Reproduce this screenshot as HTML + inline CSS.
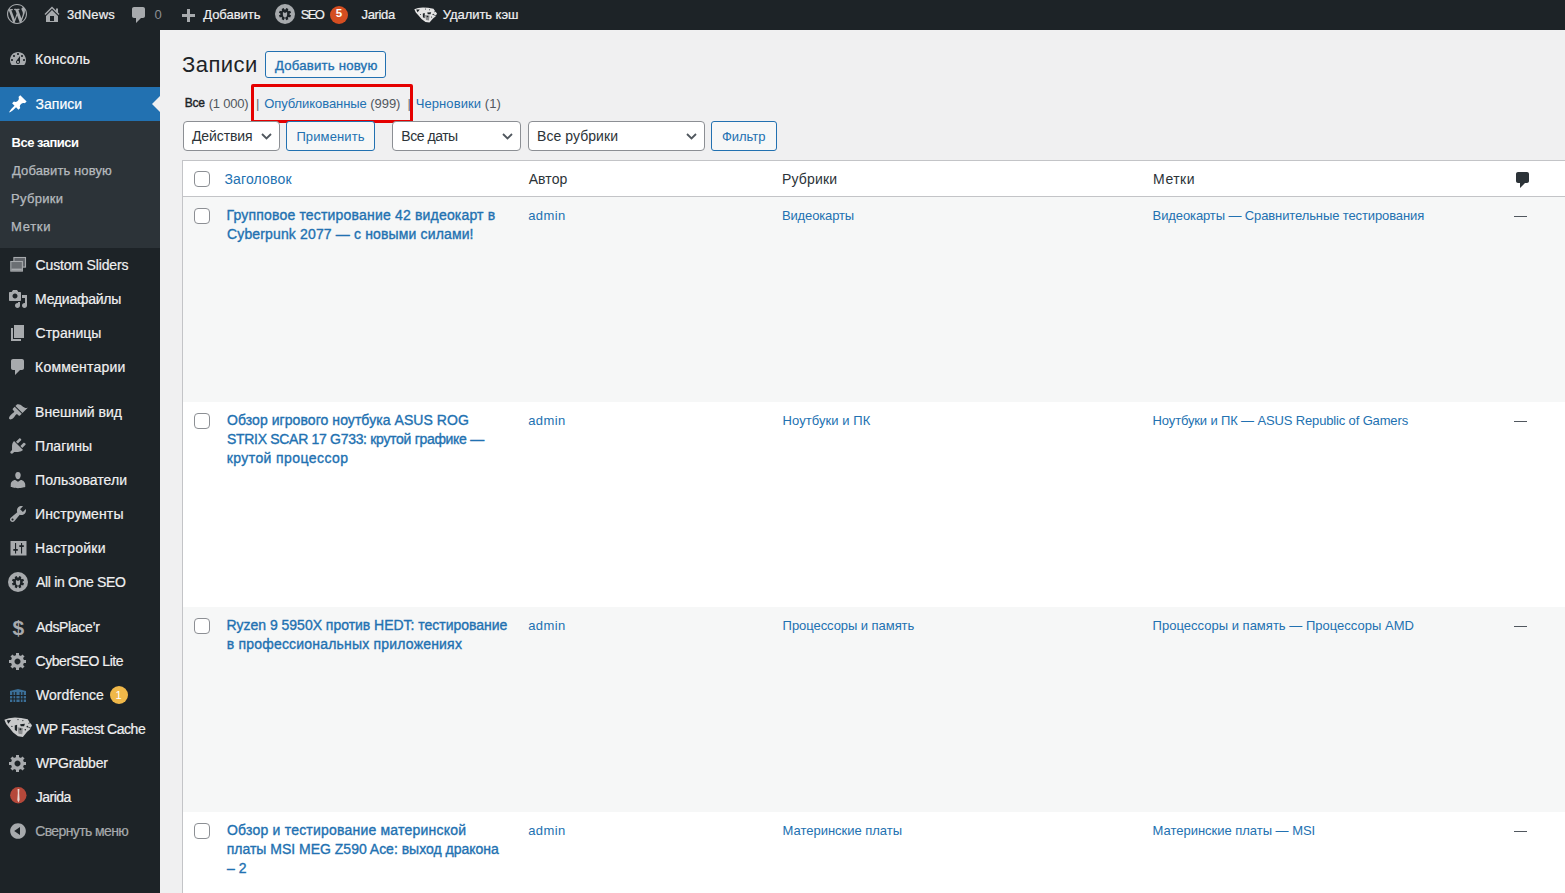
<!DOCTYPE html>
<html><head><meta charset="utf-8">
<style>
*{margin:0;padding:0;box-sizing:border-box}
html,body{width:1565px;height:893px;overflow:hidden;background:#f0f0f1;font-family:"Liberation Sans",sans-serif;font-size:13px;color:#3c434a}
.abs{position:absolute;white-space:nowrap}
.box{position:absolute}
svg{position:absolute;overflow:visible}
</style></head><body>
<div class="box" style="left:0;top:0;width:1565px;height:30px;background:#1d2327"></div>
<div class="abs" style="left:66.95px;top:8.00px;font-size:13px;line-height:13px;color:#f0f0f1;-webkit-text-stroke:0.2px #f0f0f1;letter-spacing:0.180px;">3dNews</div>
<div class="abs" style="left:154.50px;top:8.00px;font-size:13px;line-height:13px;color:#8c8f94;letter-spacing:0.750px;">0</div>
<div class="abs" style="left:203.25px;top:8.00px;font-size:13px;line-height:13px;color:#f0f0f1;-webkit-text-stroke:0.2px #f0f0f1;letter-spacing:-0.043px;">Добавить</div>
<div class="abs" style="left:300.65px;top:8.00px;font-size:13px;line-height:13px;color:#f0f0f1;-webkit-text-stroke:0.2px #f0f0f1;letter-spacing:-1.650px;">SEO</div>
<div class="abs" style="left:361.50px;top:8.00px;font-size:13px;line-height:13px;color:#f0f0f1;-webkit-text-stroke:0.2px #f0f0f1;letter-spacing:-0.350px;">Jarida</div>
<div class="abs" style="left:442.85px;top:8.00px;font-size:13px;line-height:13px;color:#f0f0f1;-webkit-text-stroke:0.2px #f0f0f1;letter-spacing:-0.060px;">Удалить кэш</div>
<svg style="left:7px;top:4px" width="20" height="20" viewBox="0 0 20 20"><path d="M20 10c0-5.51-4.49-10-10-10C4.48 0 0 4.49 0 10c0 5.52 4.48 10 10 10 5.51 0 10-4.48 10-10zM7.78 15.37L4.37 6.22c.55-.02 1.17-.08 1.17-.08.5-.06.44-1.13-.06-1.11 0 0-1.45.11-2.37.11-.18 0-.37 0-.58-.01C4.12 2.69 6.87 1.11 10 1.11c2.33 0 4.45.87 6.05 2.34-.68-.11-1.65.39-1.65 1.58 0 .74.45 1.36.9 2.1.35.61.55 1.36.55 2.46 0 1.49-1.4 5-1.4 5l-3.03-8.37c.54-.02.82-.17.82-.17.5-.05.44-1.25-.06-1.22 0 0-1.44.12-2.38.12-.87 0-2.33-.12-2.33-.12-.5-.03-.56 1.2-.06 1.22l.92.08 1.26 3.41zM17.41 10c.24-.64.74-1.87.43-4.25.7 1.290 1.05 2.71 1.05 4.25 0 3.29-1.73 6.24-4.4 7.78.97-2.59 1.94-5.2 2.92-7.78zM6.1 18.09C3.12 16.65 1.11 13.53 1.11 10c0-1.3.23-2.48.72-3.59C3.25 10.3 4.67 14.2 6.1 18.09zm4.03-6.63l2.58 6.98c-.86.29-1.76.45-2.71.45-.79 0-1.57-.11-2.29-.33.81-2.38 1.62-4.74 2.42-7.1z" fill="#a7aaad"/></svg>
<svg style="left:41.5px;top:4px" width="20" height="20" viewBox="0 0 20 20"><path d="M16 8.5l1.53 1.53-1.06 1.06L10 4.62l-6.47 6.47-1.06-1.06L10 2.5l4 4v-2h2v4zm-6-2.46l6 5.99V18H4v-5.97zM12 17v-5H8v5h4z" fill="#a7aaad"/></svg>
<svg style="left:129px;top:5px" width="20" height="20" viewBox="0 0 20 20"><path d="M5 2h9c1.1 0 2 .9 2 2v7c0 1.1-.9 2-2 2h-2l-5 5v-5H5c-1.1 0-2-.9-2-2V4c0-1.1.9-2 2-2z" fill="#a7aaad"/></svg>
<svg style="left:177.5px;top:6.5px" width="20" height="20" viewBox="0 0 20 20"><path d="M17 7v3h-5v5H9v-5H4V7h5V2h3v5h5z" fill="#a7aaad"/></svg>
<svg style="left:275px;top:4px" width="20" height="20" viewBox="0 0 20 20"><circle cx="10" cy="10" r="10" fill="#a7aaad"/><path d="M10.61 5.44 L11.24 4.02 L13.42 4.93 L12.86 6.37 L13.73 7.24 L15.17 6.68 L16.08 8.86 L14.66 9.49 L14.66 10.71 L16.08 11.34 L15.17 13.52 L13.73 12.96 L12.86 13.83 L13.42 15.27 L11.24 16.18 L10.61 14.76 L9.39 14.76 L8.76 16.18 L6.58 15.27 L7.14 13.83 L6.27 12.96 L4.83 13.52 L3.92 11.34 L5.34 10.71 L5.34 9.49 L3.92 8.86 L4.83 6.68 L6.27 7.24 L7.14 6.37 L6.58 4.93 L8.76 4.02 L9.39 5.44 Z" fill="#1d2327"/><path d="M7.9 8.2 L9.2 8.2 L9.5 9 L10.5 9 L10.8 8.2 L12.1 8.2 L12.1 11 Q12.1 13.4 10 13.6 Q7.9 13.4 7.9 11 Z" fill="#a7aaad"/><rect x="9.6" y="13.4" width="0.8" height="1.3" fill="#a7aaad"/></svg>
<div class="box" style="left:330px;top:5.5px;width:18px;height:18px;border-radius:9px;background:#d54e21"></div>
<div class="abs" style="left:335.80px;top:8.47px;font-size:11.5px;line-height:11.5px;color:#fff;font-weight:700;">5</div>
<svg style="left:414px;top:6.5px" width="23" height="16" viewBox="0 0 23 16"><path d="M0.3 2.2 L4 0.9 L9 0.4 L14 0.8 L19.5 1.8 L21 4 L23 6.5 L21.5 9.5 L19 11.5 L15.5 15.6 L11.5 15 L7.5 12 L4.5 8.5 L1.8 5.5 Z" fill="#e4e4e4"/><g fill="#1d2327"><path d="M2.2 2.6 L5.8 2.4 L3.6 5.2 Z"/><path d="M8.8 6.6 L10.8 6 L10.6 11.2 L8.9 10.2 Z"/><path d="M13.2 5.6 L17.2 5.3 L16.5 7.2 L13.8 7.2 Z"/><circle cx="11.5" cy="2" r="0.5"/><circle cx="15.5" cy="2.8" r="0.5"/><circle cx="19.2" cy="7.5" r="0.7"/><circle cx="6.5" cy="7.4" r="0.5"/><circle cx="17.5" cy="10" r="0.6"/><path d="M20 5 L22.5 4 M20 8 L23 9" stroke="#1d2327" stroke-width="0.6"/></g><path d="M11 8 L15.5 8.5 L15 13.5 L12 13 Z" fill="#8a8c8e"/><circle cx="13.5" cy="9.5" r="0.8" fill="#1d2327"/></svg>
<div class="box" style="left:0;top:30px;width:160px;height:863px;background:#1d2327"></div>
<div class="box" style="left:0;top:87px;width:160px;height:34px;background:#2271b1"></div>
<div class="box" style="left:0;top:121px;width:160px;height:127px;background:#2c3338"></div>
<svg style="left:152px;top:96px" width="8" height="16" viewBox="0 0 8 16"><path d="M8 0 L0 8 L8 16 Z" fill="#f0f0f1"/></svg>
<svg style="left:8px;top:49px" width="20" height="20" viewBox="0 0 20 20"><path d="M3.76 16h12.48c1.1-1.37 1.76-3.11 1.76-5 0-4.42-3.58-8-8-8s-8 3.58-8 8c0 1.890.66 3.63 1.76 5zM10 4c.55 0 1 .45 1 1s-.45 1-1 1-1-.45-1-1 .45-1 1-1zM6 6c.55 0 1 .45 1 1s-.45 1-1 1-1-.45-1-1 .45-1 1-1zm8 0c.55 0 1 .45 1 1s-.45 1-1 1-1-.45-1-1 .45-1 1-1zm-5.37 5.55L12 7v6c0 1.1-.9 2-2 2s-2-.9-2-2c0-.57.24-1.08.63-1.45zM4 10c.55 0 1 .45 1 1s-.45 1-1 1-1-.45-1-1 .45-1 1-1zm12 0c.55 0 1 .45 1 1s-.45 1-1 1-1-.45-1-1 .45-1 1-1zm-5 3c0-.55-.45-1-1-1s-1 .45-1 1 .45 1 1 1 1-.45 1-1z" fill="#a7aaad" fill-rule="evenodd" /></svg>
<div class="abs" style="left:35.05px;top:52.15px;font-size:14px;line-height:14px;color:#f0f0f1;-webkit-text-stroke:0.2px #f0f0f1;letter-spacing:0.225px;">Консоль</div>
<svg style="left:8px;top:94px" width="20" height="20" viewBox="0 0 20 20"><path d="M10.44 3.02l1.82-1.82 6.360 6.35-1.83 1.82c-1.05-.68-2.48-.57-3.410.36l-.75.75c-.92.93-1.04 2.35-.35 3.410l-1.83 1.82-2.41-2.41-2.8 2.79c-.42.42-3.38 2.71-3.8 2.29s1.86-3.39 2.28-3.81l2.79-2.79L4.1 9.36l1.830-1.82c1.05.69 2.48.57 3.4-.36l.75-.75c.93-.92 1.05-2.35.36-3.41z" fill="#fff" fill-rule="evenodd" /></svg>
<div class="abs" style="left:35.55px;top:97.15px;font-size:14px;line-height:14px;color:#fff;-webkit-text-stroke:0.2px #fff;letter-spacing:0.010px;">Записи</div>
<svg style="left:8px;top:255px" width="20" height="20" viewBox="0 0 20 20"><rect x="5.9" y="2.5" width="11.6" height="9.6" fill="#5f6368" stroke="#a7aaad" stroke-width="1.1"/><rect x="2.8" y="6.5" width="11.6" height="9.6" fill="#1d2327" /><rect x="2.8" y="6.5" width="11.6" height="9.6" fill="#6b6f73" stroke="#a7aaad" stroke-width="1.1"/><rect x="3.4" y="13.6" width="10.4" height="1.9" fill="#a7aaad"/></svg>
<div class="abs" style="left:35.55px;top:258.15px;font-size:14px;line-height:14px;color:#f0f0f1;-webkit-text-stroke:0.2px #f0f0f1;letter-spacing:-0.154px;">Custom Sliders</div>
<svg style="left:8px;top:289px" width="20" height="20" viewBox="0 0 20 20"><path d="M13 11V4c0-.55-.45-1-1-1h-1.67L9 1H5L3.67 3H2c-.55 0-1 .45-1 1v7c0 .55.45 1 1 1h10c.55 0 1-.45 1-1zM7 4.5c1.38 0 2.5 1.12 2.5 2.5S8.38 9.5 7 9.5 4.5 8.38 4.5 7 5.62 4.5 7 4.5zM14 6h5v10.5c0 1.38-1.12 2.5-2.5 2.5S14 17.88 14 16.5s1.12-2.5 2.5-2.5c.17 0 .34.02.5.05V9h-3V6zm-4 8.05V13h2v3.5c0 1.38-1.12 2.5-2.5 2.5S7 17.88 7 16.5 8.12 14 9.5 14c.17 0 .34.02.5.05z" fill="#a7aaad" fill-rule="evenodd" /></svg>
<div class="abs" style="left:35.05px;top:292.15px;font-size:14px;line-height:14px;color:#f0f0f1;-webkit-text-stroke:0.2px #f0f0f1;letter-spacing:-0.239px;">Медиафайлы</div>
<svg style="left:8px;top:323px" width="20" height="20" viewBox="0 0 20 20"><path d="M6 15V2h10v13H6zm-1 1h8v2H3V5h2v11z" fill="#a7aaad" fill-rule="evenodd" /></svg>
<div class="abs" style="left:35.55px;top:326.15px;font-size:14px;line-height:14px;color:#f0f0f1;-webkit-text-stroke:0.2px #f0f0f1;letter-spacing:0.014px;">Страницы</div>
<svg style="left:8px;top:357px" width="20" height="20" viewBox="0 0 20 20"><path d="M5 2h9c1.1 0 2 .9 2 2v7c0 1.1-.9 2-2 2h-2l-5 5v-5H5c-1.1 0-2-.9-2-2V4c0-1.1.9-2 2-2z" fill="#a7aaad" fill-rule="evenodd" /></svg>
<div class="abs" style="left:35.05px;top:360.15px;font-size:14px;line-height:14px;color:#f0f0f1;-webkit-text-stroke:0.2px #f0f0f1;letter-spacing:0.200px;">Комментарии</div>
<svg style="left:8px;top:402px" width="20" height="20" viewBox="0 0 20 20"><path d="M14.48 11.06L7.41 3.99l1.5-1.5c.5-.56 2.3-.47 3.51.32 1.21.8 1.43 1.28 2.91 2.1 1.18.64 2.45 1.26 4.45.85zm-.71.71L6.7 4.7 4.93 6.47c-.39.39-.39 1.02 0 1.41l1.06 1.06c.39.39.39 1.03 0 1.42-.6.6-1.43 1.11-2.21 1.690-.35.26-.7.53-1.01.84C1.43 14.23.4 16.08 1.4 17.07c.99 1 2.84-.03 4.18-1.36.31-.31.58-.66.85-1.02.57-.78 1.08-1.61 1.69-2.21.39-.39 1.02-.39 1.41 0l1.06 1.06c.39.39 1.02.39 1.41 0z" fill="#a7aaad" fill-rule="evenodd" /></svg>
<div class="abs" style="left:35.05px;top:405.15px;font-size:14px;line-height:14px;color:#f0f0f1;-webkit-text-stroke:0.2px #f0f0f1;letter-spacing:0.005px;">Внешний вид</div>
<svg style="left:8px;top:436px" width="20" height="20" viewBox="0 0 20 20"><path d="M13.11 4.36L9.87 7.6 8 5.73l3.24-3.24c.35-.34 1.05-.2 1.56.32.52.51.66 1.21.31 1.55zm-8 1.77l.91-1.12 9.01 9.01-1.19.84c-.71.71-2.63 1.16-3.82 1.16H6.14L4.9 17.26c-.59.59-1.54.59-2.12 0-.59-.58-.59-1.53 0-2.12l1.24-1.24v-3.88c0-1.13.4-3.19 1.09-3.89zm7.26 3.97l3.24-3.24c.34-.35 1.04-.21 1.55.31.52.51.66 1.21.31 1.55l-3.24 3.25z" fill="#a7aaad" fill-rule="evenodd" /></svg>
<div class="abs" style="left:35.05px;top:439.15px;font-size:14px;line-height:14px;color:#f0f0f1;-webkit-text-stroke:0.2px #f0f0f1;letter-spacing:0.033px;">Плагины</div>
<svg style="left:8px;top:470px" width="20" height="20" viewBox="0 0 20 20"><path d="M10 9.25c-2.27 0-2.73-3.44-2.73-3.44C7 4.02 7.82 2 9.97 2c2.16 0 2.98 2.02 2.71 3.81 0 0-.41 3.44-2.68 3.44zm0 2.57L12.72 10c2.39 0 4.52 2.33 4.52 4.53v2.49s-3.65 1.13-7.24 1.13c-3.65 0-7.24-1.13-7.24-1.13v-2.49c0-2.250 1.94-4.48 4.47-4.48z" fill="#a7aaad" fill-rule="evenodd" /></svg>
<div class="abs" style="left:35.05px;top:473.15px;font-size:14px;line-height:14px;color:#f0f0f1;-webkit-text-stroke:0.2px #f0f0f1;letter-spacing:0.055px;">Пользователи</div>
<svg style="left:8px;top:504px" width="20" height="20" viewBox="0 0 20 20"><path d="M16.68 9.77c-1.34 1.34-3.3 1.67-4.95.99l-5.41 6.52c-.99.99-2.59.99-3.58 0s-.99-2.59 0-3.57l6.52-5.42c-.68-1.65-.35-3.61.99-4.950 1.28-1.28 3.12-1.62 4.72-1.06l-2.89 2.89 2.82 2.82 2.86-2.87c.53 1.58.18 3.39-1.08 4.65zM3.81 16.21c.4.39 1.04.39 1.43 0 .4-.4.4-1.04 0-1.43-.39-.4-1.03-.4-1.43 0-.39.39-.39 1.03 0 1.43z" fill="#a7aaad" fill-rule="evenodd" /></svg>
<div class="abs" style="left:35.05px;top:507.15px;font-size:14px;line-height:14px;color:#f0f0f1;-webkit-text-stroke:0.2px #f0f0f1;letter-spacing:0.110px;">Инструменты</div>
<svg style="left:8px;top:538px" width="20" height="20" viewBox="0 0 20 20"><rect x="2.5" y="3" width="16" height="14.5" fill="#a7aaad"/><g fill="#1d2327"><rect x="7" y="5" width="1.1" height="10.5"/><rect x="5.3" y="11" width="4.5" height="1.8"/><rect x="13" y="5" width="1.1" height="10.5"/><rect x="11.3" y="7.2" width="4.5" height="1.8"/></g></svg>
<div class="abs" style="left:35.05px;top:541.15px;font-size:14px;line-height:14px;color:#f0f0f1;-webkit-text-stroke:0.2px #f0f0f1;letter-spacing:0.219px;">Настройки</div>
<svg style="left:8px;top:572px" width="20" height="20" viewBox="0 0 20 20"><circle cx="10" cy="10" r="10" fill="#a7aaad"/><path d="M10.61 5.44 L11.24 4.02 L13.42 4.93 L12.86 6.37 L13.73 7.24 L15.17 6.68 L16.08 8.86 L14.66 9.49 L14.66 10.71 L16.08 11.34 L15.17 13.52 L13.73 12.96 L12.86 13.83 L13.42 15.27 L11.24 16.18 L10.61 14.76 L9.39 14.76 L8.76 16.18 L6.58 15.27 L7.14 13.83 L6.27 12.96 L4.83 13.52 L3.92 11.34 L5.34 10.71 L5.34 9.49 L3.92 8.86 L4.83 6.68 L6.27 7.24 L7.14 6.37 L6.58 4.93 L8.76 4.02 L9.39 5.44 Z" fill="#1d2327"/><path d="M7.9 8.2 L9.2 8.2 L9.5 9 L10.5 9 L10.8 8.2 L12.1 8.2 L12.1 11 Q12.1 13.4 10 13.6 Q7.9 13.4 7.9 11 Z" fill="#a7aaad"/><rect x="9.6" y="13.4" width="0.8" height="1.3" fill="#a7aaad"/></svg>
<div class="abs" style="left:36.05px;top:575.15px;font-size:14px;line-height:14px;color:#f0f0f1;-webkit-text-stroke:0.2px #f0f0f1;letter-spacing:-0.323px;">All in One SEO</div>
<div class="abs" style="left:12.5px;top:617.5px;font-size:21px;line-height:20px;color:#a7aaad;font-weight:700">$</div>
<div class="abs" style="left:36.05px;top:620.15px;font-size:14px;line-height:14px;color:#f0f0f1;-webkit-text-stroke:0.2px #f0f0f1;letter-spacing:-0.350px;">AdsPlace’r</div>
<svg style="left:8px;top:651px" width="20" height="20" viewBox="0 0 20 20"><path d="M18 12h-2.18c-.17.7-.44 1.35-.81 1.93l1.54 1.54-2.1 2.1-1.54-1.54c-.58.36-1.23.63-1.91.79V19H8v-2.18c-.68-.16-1.33-.43-1.91-.79l-1.54 1.54-2.12-2.12 1.54-1.54c-.36-.58-.63-1.230-.79-1.91H1V9.03h2.17c.16-.7.44-1.35.8-1.94L2.43 5.55l2.1-2.1 1.54 1.54c.58-.37 1.24-.64 1.93-.81V2h3v2.18c.68.16 1.33.43 1.91.79l1.54-1.54 2.12 2.12-1.54 1.54c.36.59.64 1.24.8 1.94H18V12zm-8.5 1.5c1.66 0 3-1.34 3-3s-1.34-3-3-3-3 1.34-3 3 1.34 3 3 3z" fill="#a7aaad" fill-rule="evenodd" /></svg>
<div class="abs" style="left:35.55px;top:654.15px;font-size:14px;line-height:14px;color:#f0f0f1;-webkit-text-stroke:0.2px #f0f0f1;letter-spacing:-0.446px;">CyberSEO Lite</div>
<svg style="left:9.5px;top:689px" width="16" height="13" viewBox="0 0 16 13"><path d="M0 2 L4 1 L8 0 L12 1 L16 2 V13 H0 Z" fill="#3b6f98"/><g fill="#1d2327"><rect x="2.3" y="3" width="1.2" height="10"/><rect x="5.2" y="3" width="1.2" height="10"/><rect x="9.6" y="3" width="1.2" height="10"/><rect x="12.5" y="3" width="1.2" height="10"/><rect x="0" y="6" width="16" height="1.1"/><rect x="0" y="9.4" width="16" height="1.1"/></g></svg>
<div class="abs" style="left:36.05px;top:688.15px;font-size:14px;line-height:14px;color:#f0f0f1;-webkit-text-stroke:0.2px #f0f0f1;letter-spacing:0.037px;">Wordfence</div>
<div class="box" style="left:110px;top:686px;width:18px;height:18px;border-radius:9px;background:#f0b849"></div>
<div class="abs" style="left:115.50px;top:690.19px;font-size:11px;line-height:11px;color:#fff;">1</div>
<svg style="left:3.5px;top:717.2px" width="28" height="20.5" viewBox="0 0 23 16" preserveAspectRatio="none"><path d="M0.3 2.2 L4 0.9 L9 0.4 L14 0.8 L19.5 1.8 L21 4 L23 6.5 L21.5 9.5 L19 11.5 L15.5 15.6 L11.5 15 L7.5 12 L4.5 8.5 L1.8 5.5 Z" fill="#c9cacb"/><g fill="#1d2327"><path d="M2.2 2.6 L5.8 2.4 L3.6 5.2 Z"/><path d="M8.8 6.6 L10.8 6 L10.6 11.2 L8.9 10.2 Z"/><path d="M13.2 5.6 L17.2 5.3 L16.5 7.2 L13.8 7.2 Z"/><circle cx="11.5" cy="2" r="0.5"/><circle cx="15.5" cy="2.8" r="0.5"/><circle cx="19.2" cy="7.5" r="0.7"/><circle cx="6.5" cy="7.4" r="0.5"/><circle cx="17.5" cy="10" r="0.6"/><path d="M20 5 L22.5 4 M20 8 L23 9" stroke="#1d2327" stroke-width="0.6"/></g><path d="M11 8 L15.5 8.5 L15 13.5 L12 13 Z" fill="#8a8c8e"/><circle cx="13.5" cy="9.5" r="0.8" fill="#1d2327"/></svg>
<div class="abs" style="left:36.05px;top:722.15px;font-size:14px;line-height:14px;color:#f0f0f1;-webkit-text-stroke:0.2px #f0f0f1;letter-spacing:-0.453px;">WP Fastest Cache</div>
<svg style="left:8px;top:753px" width="20" height="20" viewBox="0 0 20 20"><path d="M18 12h-2.18c-.17.7-.44 1.35-.81 1.93l1.54 1.54-2.1 2.1-1.54-1.54c-.58.36-1.23.63-1.91.79V19H8v-2.18c-.68-.16-1.33-.43-1.91-.79l-1.54 1.54-2.12-2.12 1.54-1.54c-.36-.58-.63-1.230-.79-1.91H1V9.03h2.17c.16-.7.44-1.35.8-1.94L2.43 5.55l2.1-2.1 1.54 1.54c.58-.37 1.24-.64 1.93-.81V2h3v2.18c.68.16 1.33.43 1.91.79l1.54-1.54 2.12 2.12-1.54 1.54c.36.59.64 1.24.8 1.94H18V12zm-8.5 1.5c1.66 0 3-1.34 3-3s-1.34-3-3-3-3 1.34-3 3 1.34 3 3 3z" fill="#a7aaad" fill-rule="evenodd" /></svg>
<div class="abs" style="left:36.05px;top:756.15px;font-size:14px;line-height:14px;color:#f0f0f1;-webkit-text-stroke:0.2px #f0f0f1;letter-spacing:-0.269px;">WPGrabber</div>
<svg style="left:9.5px;top:787px" width="17" height="17" viewBox="0 0 17 17"><circle cx="8.3" cy="8.3" r="8.2" fill="#b5483a"/><path d="M7.6 2 L9.4 2 L9.2 6 L9.6 13 L8.4 15.5 L7.3 13 L7.8 6 Z" fill="#e9d5d0"/></svg>
<div class="abs" style="left:35.80px;top:790.15px;font-size:14px;line-height:14px;color:#f0f0f1;-webkit-text-stroke:0.2px #f0f0f1;letter-spacing:-0.540px;">Jarida</div>
<svg style="left:8px;top:821px" width="20" height="20" viewBox="0 0 20 20"><path d="M10 2.16c4.33 0 7.84 3.51 7.84 7.84s-3.51 7.84-7.84 7.84S2.16 14.33 2.16 10 5.71 2.16 10 2.16zm2 11.72V6.12L6.18 9.97z" fill="#a7aaad" fill-rule="evenodd" /></svg>
<div class="abs" style="left:35.15px;top:824.15px;font-size:14px;line-height:14px;color:#a7aaad;-webkit-text-stroke:0.2px #a7aaad;letter-spacing:-0.608px;">Свернуть меню</div>
<div class="abs" style="left:11.55px;top:135.50px;font-size:13px;line-height:13px;color:#fff;font-weight:700;letter-spacing:-0.511px;">Все записи</div>
<div class="abs" style="left:12.05px;top:163.50px;font-size:13px;line-height:13px;color:rgba(240,246,252,.7);-webkit-text-stroke:0.25px #b8babc;letter-spacing:0.108px;">Добавить новую</div>
<div class="abs" style="left:11.05px;top:191.50px;font-size:13px;line-height:13px;color:rgba(240,246,252,.7);-webkit-text-stroke:0.25px #b8babc;letter-spacing:0.283px;">Рубрики</div>
<div class="abs" style="left:11.05px;top:219.50px;font-size:13px;line-height:13px;color:rgba(240,246,252,.7);-webkit-text-stroke:0.25px #b8babc;letter-spacing:0.675px;">Метки</div>
<div class="abs" style="left:181.95px;top:53.98px;font-size:22px;line-height:22px;color:#1d2327;letter-spacing:0.490px;">Записи</div>
<div class="box" style="left:265px;top:51px;width:121px;height:27px;border:1px solid #2271b1;border-radius:3px;background:#f6f7f7"></div>
<div class="abs" style="left:274.90px;top:59.03px;font-size:13.2px;line-height:13.2px;color:#2271b1;-webkit-text-stroke:0.35px #2271b1;letter-spacing:0.204px;">Добавить новую</div>
<div class="abs" style="left:184.75px;top:97.34px;font-size:12px;line-height:12px;color:#1d2327;-webkit-text-stroke:0.4px #1d2327;letter-spacing:-0.225px;">Все</div>
<div class="abs" style="left:208.75px;top:96.50px;font-size:13px;line-height:13px;color:#50575e;letter-spacing:-0.208px;">(1 000)</div>
<div class="abs" style="left:256.00px;top:96.50px;font-size:13px;line-height:13px;color:#646970;">|</div>
<div class="abs" style="left:264.20px;top:96.50px;font-size:13px;line-height:13px;color:#2271b1;letter-spacing:-0.066px;">Опубликованные <span style='color:#50575e'>(999)</span></div>
<div class="abs" style="left:407.50px;top:96.50px;font-size:13px;line-height:13px;color:#646970;">|</div>
<div class="abs" style="left:415.70px;top:96.50px;font-size:13px;line-height:13px;color:#2271b1;letter-spacing:0.088px;">Черновики <span style='color:#50575e'>(1)</span></div>
<div class="box" style="left:251px;top:84px;width:162px;height:39px;border:3px solid #e50000;border-radius:2px"></div>
<div class="box" style="left:183px;top:121px;width:97px;height:30px;border:1px solid #8c8f94;border-radius:4px;background:#fff"></div>
<div class="abs" style="left:192.00px;top:129.15px;font-size:14px;line-height:14px;color:#2c3338;letter-spacing:-0.114px;">Действия</div>
<svg style="left:261px;top:133px" width="11" height="7" viewBox="0 0 11 7"><path d="M1 1 L5.5 5.5 L10 1" fill="none" stroke="#50575e" stroke-width="1.8"/></svg>
<div class="box" style="left:286px;top:121px;width:89px;height:30px;border:1px solid #2271b1;border-radius:3px;background:#f6f7f7"></div>
<div class="abs" style="left:296.40px;top:130.00px;font-size:13px;line-height:13px;color:#2271b1;letter-spacing:0.131px;">Применить</div>
<div class="box" style="left:392px;top:121px;width:129px;height:30px;border:1px solid #8c8f94;border-radius:4px;background:#fff"></div>
<div class="abs" style="left:401.30px;top:129.15px;font-size:14px;line-height:14px;color:#2c3338;letter-spacing:-0.464px;">Все даты</div>
<svg style="left:502px;top:133px" width="11" height="7" viewBox="0 0 11 7"><path d="M1 1 L5.5 5.5 L10 1" fill="none" stroke="#50575e" stroke-width="1.8"/></svg>
<div class="box" style="left:528px;top:121px;width:177px;height:30px;border:1px solid #8c8f94;border-radius:4px;background:#fff"></div>
<div class="abs" style="left:537.00px;top:129.15px;font-size:14px;line-height:14px;color:#2c3338;letter-spacing:0.060px;">Все рубрики</div>
<svg style="left:686px;top:133px" width="11" height="7" viewBox="0 0 11 7"><path d="M1 1 L5.5 5.5 L10 1" fill="none" stroke="#50575e" stroke-width="1.8"/></svg>
<div class="box" style="left:711px;top:121px;width:66px;height:30px;border:1px solid #2271b1;border-radius:3px;background:#f6f7f7"></div>
<div class="abs" style="left:721.95px;top:130.00px;font-size:13px;line-height:13px;color:#2271b1;letter-spacing:-0.040px;">Фильтр</div>
<div class="box" style="left:182px;top:160px;width:1390px;height:740px;border:1px solid #c3c4c7;background:#fff"></div>
<div class="box" style="left:183px;top:196px;width:1390px;height:1px;background:#c3c4c7"></div>
<div class="box" style="left:183px;top:197px;width:1390px;height:205px;background:#f6f7f7"></div>
<div class="box" style="left:183px;top:402px;width:1390px;height:205px;background:#fff"></div>
<div class="box" style="left:183px;top:607px;width:1390px;height:205px;background:#f6f7f7"></div>
<div class="box" style="left:183px;top:812px;width:1390px;height:205px;background:#fff"></div>
<div class="box" style="left:194px;top:171px;width:16px;height:16px;border:1px solid #8c8f94;border-radius:4px;background:#fff"></div>
<div class="abs" style="left:224.40px;top:172.45px;font-size:14px;line-height:14px;color:#2271b1;letter-spacing:0.169px;">Заголовок</div>
<div class="abs" style="left:528.70px;top:172.45px;font-size:14px;line-height:14px;color:#2c3338;letter-spacing:0.087px;">Автор</div>
<div class="abs" style="left:781.90px;top:172.45px;font-size:14px;line-height:14px;color:#2c3338;letter-spacing:0.192px;">Рубрики</div>
<div class="abs" style="left:1153.10px;top:172.45px;font-size:14px;line-height:14px;color:#2c3338;letter-spacing:0.475px;">Метки</div>
<svg style="left:1513px;top:170px" width="20" height="20" viewBox="0 0 20 20"><path d="M5 2h9c1.1 0 2 .9 2 2v7c0 1.1-.9 2-2 2h-2l-5 5v-5H5c-1.1 0-2-.9-2-2V4c0-1.1.9-2 2-2z" fill="#2c3338"/></svg>
<div class="box" style="left:194px;top:208px;width:16px;height:16px;border:1px solid #8c8f94;border-radius:4px;background:#fff"></div>
<div class="abs" style="left:226.50px;top:208.15px;font-size:14px;line-height:14px;color:#2271b1;-webkit-text-stroke:0.35px #2271b1;letter-spacing:0.182px;">Групповое тестирование 42 видеокарт в</div>
<div class="abs" style="left:227.00px;top:227.00px;font-size:14px;line-height:14px;color:#2271b1;-webkit-text-stroke:0.35px #2271b1;letter-spacing:0.145px;">Cyberpunk 2077 — с новыми силами!</div>
<div class="abs" style="left:528.20px;top:209.00px;font-size:13px;line-height:13px;color:#2271b1;letter-spacing:0.425px;">admin</div>
<div class="abs" style="left:781.90px;top:209.00px;font-size:13px;line-height:13px;color:#2271b1;letter-spacing:-0.122px;">Видеокарты</div>
<div class="abs" style="left:1152.60px;top:209.00px;font-size:13px;line-height:13px;color:#2271b1;letter-spacing:-0.111px;">Видеокарты — Сравнительные тестирования</div>
<div class="box" style="left:1514px;top:216px;width:13px;height:1.3px;background:#50575e"></div>
<div class="box" style="left:194px;top:413px;width:16px;height:16px;border:1px solid #8c8f94;border-radius:4px;background:#fff"></div>
<div class="abs" style="left:227.00px;top:413.15px;font-size:14px;line-height:14px;color:#2271b1;-webkit-text-stroke:0.35px #2271b1;letter-spacing:0.065px;">Обзор игрового ноутбука ASUS ROG</div>
<div class="abs" style="left:227.00px;top:432.00px;font-size:14px;line-height:14px;color:#2271b1;-webkit-text-stroke:0.35px #2271b1;letter-spacing:-0.306px;">STRIX SCAR 17 G733: крутой графике —</div>
<div class="abs" style="left:226.75px;top:450.85px;font-size:14px;line-height:14px;color:#2271b1;-webkit-text-stroke:0.35px #2271b1;letter-spacing:0.410px;">крутой процессор</div>
<div class="abs" style="left:528.20px;top:414.00px;font-size:13px;line-height:13px;color:#2271b1;letter-spacing:0.425px;">admin</div>
<div class="abs" style="left:782.60px;top:414.00px;font-size:13px;line-height:13px;color:#2271b1;letter-spacing:0.062px;">Ноутбуки и ПК</div>
<div class="abs" style="left:1152.60px;top:414.00px;font-size:13px;line-height:13px;color:#2271b1;letter-spacing:-0.145px;">Ноутбуки и ПК — ASUS Republic of Gamers</div>
<div class="box" style="left:1514px;top:421px;width:13px;height:1.3px;background:#50575e"></div>
<div class="box" style="left:194px;top:618px;width:16px;height:16px;border:1px solid #8c8f94;border-radius:4px;background:#fff"></div>
<div class="abs" style="left:226.50px;top:618.15px;font-size:14px;line-height:14px;color:#2271b1;-webkit-text-stroke:0.35px #2271b1;letter-spacing:-0.020px;">Ryzen 9 5950X против HEDT: тестирование</div>
<div class="abs" style="left:226.75px;top:637.00px;font-size:14px;line-height:14px;color:#2271b1;-webkit-text-stroke:0.35px #2271b1;letter-spacing:0.195px;">в профессиональных приложениях</div>
<div class="abs" style="left:528.20px;top:619.00px;font-size:13px;line-height:13px;color:#2271b1;letter-spacing:0.425px;">admin</div>
<div class="abs" style="left:782.60px;top:619.00px;font-size:13px;line-height:13px;color:#2271b1;letter-spacing:-0.058px;">Процессоры и память</div>
<div class="abs" style="left:1152.60px;top:619.00px;font-size:13px;line-height:13px;color:#2271b1;letter-spacing:0.016px;">Процессоры и память — Процессоры AMD</div>
<div class="box" style="left:1514px;top:626px;width:13px;height:1.3px;background:#50575e"></div>
<div class="box" style="left:194px;top:823px;width:16px;height:16px;border:1px solid #8c8f94;border-radius:4px;background:#fff"></div>
<div class="abs" style="left:227.00px;top:823.15px;font-size:14px;line-height:14px;color:#2271b1;-webkit-text-stroke:0.35px #2271b1;letter-spacing:0.208px;">Обзор и тестирование материнской</div>
<div class="abs" style="left:226.75px;top:842.00px;font-size:14px;line-height:14px;color:#2271b1;-webkit-text-stroke:0.35px #2271b1;letter-spacing:-0.007px;">платы MSI MEG Z590 Ace: выход дракона</div>
<div class="abs" style="left:227.00px;top:860.85px;font-size:14px;line-height:14px;color:#2271b1;-webkit-text-stroke:0.35px #2271b1;">– 2</div>
<div class="abs" style="left:528.20px;top:824.00px;font-size:13px;line-height:13px;color:#2271b1;letter-spacing:0.425px;">admin</div>
<div class="abs" style="left:782.60px;top:824.00px;font-size:13px;line-height:13px;color:#2271b1;letter-spacing:-0.025px;">Материнские платы</div>
<div class="abs" style="left:1152.60px;top:824.00px;font-size:13px;line-height:13px;color:#2271b1;letter-spacing:-0.023px;">Материнские платы — MSI</div>
<div class="box" style="left:1514px;top:831px;width:13px;height:1.3px;background:#50575e"></div>
</body></html>
